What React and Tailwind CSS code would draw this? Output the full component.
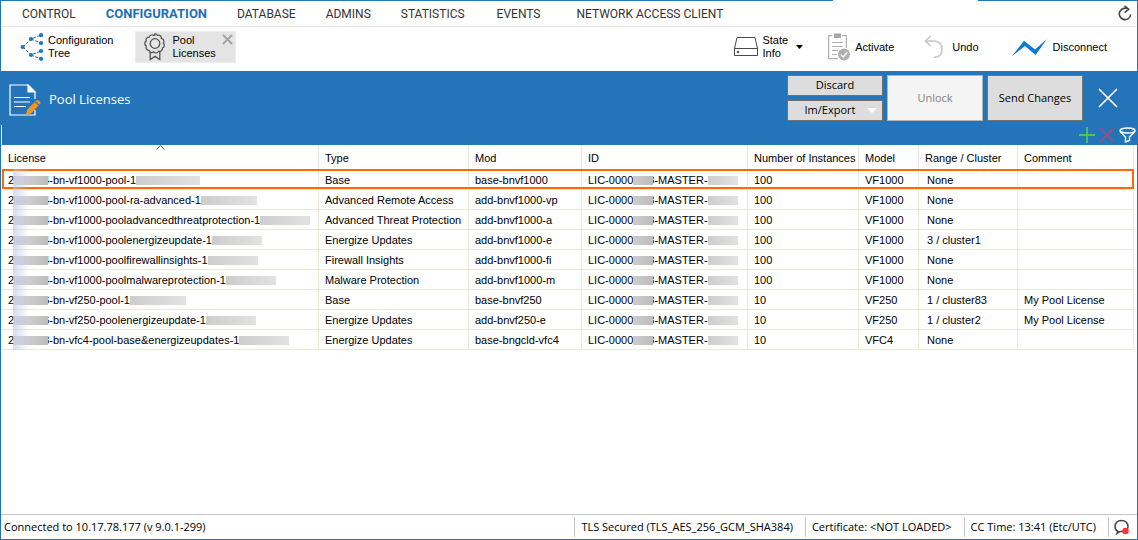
import React, { useState } from 'react';

const menu = [
    { label: 'CONTROL', gap: 'mr-[30px]' },
    { label: 'CONFIGURATION', gap: 'mr-[30px]' },
    { label: 'DATABASE', gap: 'mr-[30px]' },
    { label: 'ADMINS', gap: 'mr-[30px]' },
    { label: 'STATISTICS', gap: 'mr-8' },
    { label: 'EVENTS', gap: 'mr-9' },
    { label: 'NETWORK ACCESS CLIENT', gap: '' },
];

const columns = [
    { label: 'License', width: 'w-[317px]' },
    { label: 'Type', width: 'w-[150px]' },
    { label: 'Mod', width: 'w-[113px]' },
    { label: 'ID', width: 'w-[166px]' },
    { label: 'Number of Instances', width: 'w-[111px]' },
    { label: 'Model', width: 'w-[60px]' },
    { label: 'Range / Cluster', width: 'w-[99px]' },
    { label: 'Comment', width: '' },
];

const licenses = [
    { name: '4-bn-vf1000-pool-1', mask: 'w-16', type: 'Base', mod: 'base-bnvf1000', instances: 100, model: 'VF1000', range: 'None', comment: '' },
    { name: '4-bn-vf1000-pool-ra-advanced-1', mask: 'w-14', type: 'Advanced Remote Access', mod: 'add-bnvf1000-vp', instances: 100, model: 'VF1000', range: 'None', comment: '' },
    { name: '4-bn-vf1000-pooladvancedthreatprotection-1', mask: 'w-[50px]', type: 'Advanced Threat Protection', mod: 'add-bnvf1000-a', instances: 100, model: 'VF1000', range: 'None', comment: '' },
    { name: '4-bn-vf1000-poolenergizeupdate-1', mask: 'w-[50px]', type: 'Energize Updates', mod: 'add-bnvf1000-e', instances: 100, model: 'VF1000', range: '3 / cluster1', comment: '' },
    { name: '4-bn-vf1000-poolfirewallinsights-1', mask: 'w-[50px]', type: 'Firewall Insights', mod: 'add-bnvf1000-fi', instances: 100, model: 'VF1000', range: 'None', comment: '' },
    { name: '4-bn-vf1000-poolmalwareprotection-1', mask: 'w-[50px]', type: 'Malware Protection', mod: 'add-bnvf1000-m', instances: 100, model: 'VF1000', range: 'None', comment: '' },
    { name: '6-bn-vf250-pool-1', mask: 'w-14', type: 'Base', mod: 'base-bnvf250', instances: 10, model: 'VF250', range: '1 / cluster83', comment: 'My Pool License' },
    { name: '6-bn-vf250-poolenergizeupdate-1', mask: 'w-[50px]', type: 'Energize Updates', mod: 'add-bnvf250-e', instances: 10, model: 'VF250', range: '1 / cluster2', comment: 'My Pool License' },
    { name: '3-bn-vfc4-pool-base&energizeupdates-1', mask: 'w-[50px]', type: 'Energize Updates', mod: 'base-bngcld-vfc4', instances: 10, model: 'VFC4', range: 'None', comment: '' },
];

// Greyed-out part of a serial number
function Mask({ className }) {
    return <span className={`relative inline-block h-[9px] shrink-0 ${className}`}></span>;
}

function TreeIcon() {
    return (
        <svg className="w-6 h-7 shrink-0" viewBox="0 0 24 28" fill="#0a7ad6" aria-hidden="true">
            <path d="M3 14 11 6 21 2M11 6l10 4M3 14l8 8 10-4M11 22l10 4" fill="none" stroke="#555" strokeWidth="1" strokeDasharray="3 1.5" />
            <circle cx="2.6" cy="14" r="2.1" />
            <circle cx="11" cy="6" r="2.1" />
            <circle cx="11" cy="22" r="2.1" />
            <circle cx="21" cy="2.2" r="2.1" />
            <circle cx="21" cy="10" r="2.1" />
            <circle cx="21" cy="18" r="2.1" />
            <circle cx="21" cy="25.8" r="2.1" />
        </svg>
    );
}

function RibbonIcon() {
    return (
        <svg className="w-[22px] h-7 shrink-0" viewBox="0 0 22 28" fill="none" stroke="#555" strokeWidth="1.3" aria-hidden="true">
            <path d="M11 .9q1.6 0 2.5 1.4 1.6-.5 2.8.5t1.1 2.6q1.7.4 2.3 1.9t-.4 2.8q1.3 1.1 1 2.7t-1.9 2.2q.2 1.7-1 2.7t-2.7.6q-.8 1.4-2.4 1.6t-2.6-1.1q-1.3 1.1-2.8.6t-2-2.1q-1.7-.1-2.5-1.4t-.1-2.8q-1.4-.9-1.5-2.5t1.3-2.5q-.5-1.6.5-2.8t2.6-1.2q.5-1.6 2-2.1t2.8.5q.4-.7 1-.7z" />
            <circle cx="11" cy="10.5" r="4.8" />
            <path d="M6.2 19v7.6l4.8-3.2 4.8 3.2V19" />
        </svg>
    );
}

function DriveIcon() {
    return (
        <svg className="w-6 h-5 shrink-0" viewBox="0 0 24 20" fill="none" stroke="#4a4a4a" aria-hidden="true">
            <path d="M.5 11.5 3 .5h18l2.5 11zM.5 10.5v8h23v-8" />
            <circle cx="4" cy="15" r="1" fill="#4a4a4a" strokeWidth=".6" />
        </svg>
    );
}

function ClipboardIcon() {
    return (
        <svg className="w-6 h-7 shrink-0" viewBox="0 0 24 28" fill="none" stroke="#b0b0b0" strokeWidth="1.2" aria-hidden="true">
            <path d="M5 2.6H1.6v23H11M15 2.6h4.4V15M5 9.5h11M5 13.5h11M5 17.5h6M5 21.5h5" />
            <path d="M7 .5h7v4.500h-7z" fill="#a6a6a6" stroke="none" />
            <circle cx="17" cy="21.5" r="6" fill="#b0b0b0" stroke="none" />
            <path d="m14 21.7 2.2 2.3 4-4.7" stroke="#fff" strokeWidth="1.4" />
        </svg>
    );
}

function UndoIcon() {
    return (
        <svg className="w-5 h-6 shrink-0" viewBox="0 0 20 24" fill="none" stroke="#c8c8c8" strokeWidth="1.7" aria-hidden="true">
            <path d="M6.5 1 1.5 6l5 5M1.5 6H10q8 .5 8 8.200T10 22.300" />
        </svg>
    );
}

function PageEditIcon() {
    return (
        <svg className="w-8 h-8 shrink-0" viewBox="0 0 32 32" fill="none" stroke="#fff" strokeWidth="1.2" aria-hidden="true">
            <path d="M26 26v5H1V1h18l7 7v7" />
            <path d="M19 1v7h7z" fill="#fff" />
            <path d="M5 13.500h16M5 18h16M5 22.500h12" />
            <path d="m18.500 25.500 7.200-7.500 3.800 3.500-7.200 7.700-5.800 2z" fill="#f7941d" stroke="none" />
            <path d="m26.500 17.200 1-1q.8-.7 1.700 0l2 1.800q.8.800 0 1.700l-1 1z" fill="#f7941d" stroke="none" />
        </svg>
    );
}

function ActionButton({ className, children, ...props }) {
    return (
        <button
            type="button"
            className={`flex w-24 items-center justify-center border border-[#707070] bg-[#dddddd] text-black disabled:border-[#b5b5b5] disabled:bg-[#f4f4f4] disabled:text-[#838383] ${className}`}
            {...props}
        >
            {children}
        </button>
    );
}

export default function App() {
    const [active, setActive] = useState('CONFIGURATION');
    const [selected, setSelected] = useState(0);

    return (
        <div className="flex min-h-screen flex-col bg-white text-[11px] text-black font-['Liberation_Sans',sans-serif]">
            {/* Window edge */}
            <div className="flex h-px">
                <div className="flex-1 bg-[#2474ba]"></div>
                <div className="w-[145px]"></div>
                <div className="w-40 bg-[#2474ba]"></div>
            </div>

            <div className="flex flex-1 flex-col border-x border-b border-[#2474ba]">
                {/* Main menu */}
                <nav className="mx-px flex h-[26px] items-center border-b border-[#e5e5e5] pl-5 pr-1 text-xs text-[#333] font-[Roboto,sans-serif]">
                    {menu.map((item) => (
                        <a
                            key={item.label}
                            href="#"
                            onClick={() => setActive(item.label)}
                            className={`${item.gap} ${active === item.label ? 'text-[13px] font-bold text-[#1f6fb5]' : ''}`}
                        >
                            {item.label}
                        </a>
                    ))}
                    <button type="button" aria-label="Refresh" className="ml-auto">
                        <svg className="h-[17px] w-[14px]" viewBox="0 0 14 17" fill="none" stroke="#444" strokeWidth="1.600">
                            <path d="M10.500 4.400A5.700 5.700 0 1 0 12.700 9.500M6.500.8l4.200 3.500-4.200 3.300" />
                        </svg>
                    </button>
                </nav>

                {/* Toolbar */}
                <div className="flex h-11 items-center pb-1 pl-[19px] pr-[30px] leading-[13px]">
                    <button type="button" className="flex items-center gap-1 text-left">
                        <TreeIcon />
                        <span>Configuration<br />Tree</span>
                    </button>
                    <div className="ml-[22px] flex h-8 w-[101px] items-center gap-1.5 border border-[#ececec] bg-[#e4e4e4] pl-2">
                        <RibbonIcon />
                        <span>Pool<br />Licenses</span>
                        <button type="button" aria-label="Close tab" className="ml-auto mr-0.5 self-start pt-0.5">
                            <svg className="h-[11px] w-[11px]" viewBox="0 0 11 11" stroke="#a3a3a3" strokeWidth="1.800">
                                <path d="m1 1 9 9M10 1l-9 9" />
                            </svg>
                        </button>
                    </div>

                    <button type="button" className="ml-auto flex items-center gap-1 text-left">
                        <DriveIcon />
                        <span>State<br />Info</span>
                        <svg className="ml-1 h-1 w-[7px]" viewBox="0 0 7 4">
                            <path d="M0 0h7L3.500 4z" />
                        </svg>
                    </button>
                    <button type="button" className="ml-6 flex items-center gap-1">
                        <ClipboardIcon />
                        Activate
                    </button>
                    <button type="button" className="ml-[30px] flex items-center gap-2">
                        <UndoIcon />
                        Undo
                    </button>
                    <button type="button" className="ml-[33px] flex items-center gap-1.5">
                        <svg className="h-[17px] w-[35px]" viewBox="0 0 35 17" aria-hidden="true">
                            <path d="M0 17 12 1.800l11 8.700L35 0 23.500 16 13 7z" fill="#0a7ad6" />
                        </svg>
                        Disconnect
                    </button>
                </div>

                {/* Page header */}
                <header className="flex bg-[#2474ba] pb-1 pl-2 pr-[19px] pt-1 font-['Open_Sans',sans-serif]">
                    <div className="flex h-[46px] items-center gap-2 pt-1 text-[13px] text-white">
                        <PageEditIcon />
                        <h1>Pool Licenses</h1>
                    </div>
                    <div className="ml-auto grid grid-cols-3 grid-rows-2 gap-1">
                        <ActionButton className="h-[21px]">Discard</ActionButton>
                        <ActionButton className="row-span-2" disabled>Unlock</ActionButton>
                        <ActionButton className="row-span-2">Send Changes</ActionButton>
                        <ActionButton className="h-[21px] gap-3">
                            <span className="pl-3">Im/Export</span>
                            <svg className="h-[5px] w-[10px]" viewBox="0 0 10 5">
                                <path d="M0 0h10L5 5z" fill="#fff" />
                            </svg>
                        </ActionButton>
                    </div>
                    <button type="button" aria-label="Close" className="ml-[15px]">
                        <svg className="h-5 w-5" viewBox="0 0 20 20" stroke="#fff" strokeWidth="1.700">
                            <path d="m1 1 18 18M19 1 1 19" />
                        </svg>
                    </button>
                </header>

                {/* List actions */}
                <div className="flex h-5 items-center justify-end gap-1 border-l border-white bg-[#2474ba] pr-px">
                    <button type="button" aria-label="Add">
                        <svg className="h-4 w-4" viewBox="0 0 16 16" stroke="#4fc74f" strokeWidth="1.800">
                            <path d="M8 0v16M0 8h16" />
                        </svg>
                    </button>
                    <button type="button" aria-label="Delete">
                        <svg className="h-4 w-4" viewBox="0 0 16 16" stroke="#8c5580" strokeWidth="1.800">
                            <path d="m1 1 14 14M15 1 1 15" />
                        </svg>
                    </button>
                    <button type="button" aria-label="Filter">
                        <svg className="h-4 w-[17px]" viewBox="0 0 17 16" fill="none" stroke="#fff" strokeWidth="1.400">
                            <ellipse cx="8.500" cy="3.500" rx="7.500" ry="2.500" />
                            <path d="M1 4.200 6.500 10v5l4-1.500V10L16 4.200" />
                        </svg>
                    </button>
                </div>

                {/* Licenses */}
                <div className="flex-1 pl-px pr-[3px]">
                    <table className="w-full table-fixed border-separate border-spacing-0 text-left">
                        <thead>
                            <tr>
                                {columns.map((column, i) => (
                                    <th
                                        key={column.label}
                                        className={`relative h-6 whitespace-nowrap border-r border-[#e5e5e5] p-0 pl-1.5 pt-0.5 font-normal ${column.width}`}
                                    >
                                        {column.label}
                                        {i === 0 && (
                                            <svg className="absolute inset-x-0 top-0 mx-auto h-[5px] w-[9px]" viewBox="0 0 9 5" fill="none" stroke="#555">
                                                <path d="m.5 4.500 4-4 4 4" />
                                            </svg>
                                        )}
                                    </th>
                                ))}
                            </tr>
                        </thead>
                        <tbody>
                            {licenses.map((row, i) => (
                                <tr
                                    key={row.name}
                                    onClick={() => setSelected(i)}
                                    className={`relative h-5 last:h-[21px] *:border-t *:border-r *:border-[#ece9d8] *:p-0 *:pt-0.5 *:pl-1.5 *:whitespace-nowrap last:*:border-b ${selected === i ? 'z-10 outline-2 -outline-offset-2 outline-[#ff6a00]' : ''}`}
                                >
                                    <td>
                                        <div className="flex items-center">
                                            2
                                            <Mask className="-mr-[5px] w-[34px] bg-linear-to-r from-[#d9d9de] to-[#bcbcbc]" />
                                            {row.name}
                                            <Mask className={`bg-linear-to-r from-[#cdcdcd] to-[#e2e2e2] ${row.mask}`} />
                                        </div>
                                        <span className="absolute inset-y-0 left-[11px] w-[17px] bg-linear-to-r from-[#b9c6e2]/60 to-transparent"></span>
                                    </td>
                                    <td>{row.type}</td>
                                    <td>{row.mod}</td>
                                    <td>
                                        <div className="flex items-center">
                                            LIC-0000
                                            <Mask className="-mr-[5px] w-5 bg-linear-to-r from-[#cdcdcd] to-[#bcbcbc]" />
                                            8-MASTER-
                                            <Mask className="w-[30px] bg-linear-to-r from-[#cdcdcd] to-[#e2e2e2]" />
                                        </div>
                                    </td>
                                    <td>{row.instances}</td>
                                    <td>{row.model}</td>
                                    <td><span className="pl-0.5">{row.range}</span></td>
                                    <td>{row.comment}</td>
                                </tr>
                            ))}
                        </tbody>
                    </table>
                </div>

                {/* Status bar */}
                <footer className="flex h-[25px] items-center border-t border-[#c6c6c6] px-[3px] leading-5 font-['Open_Sans',sans-serif]">
                    <span>Connected to 10.17.78.177 (v 9.0.1-299)</span>
                    <span className="ml-auto border-l border-[#c6c6c6] pl-1.5 pr-3">TLS Secured (TLS_AES_256_GCM_SHA384)</span>
                    <span className="border-l border-[#c6c6c6] pl-1.5 pr-3">Certificate: &lt;NOT LOADED&gt;</span>
                    <span className="border-l border-[#c6c6c6] pl-1.5 pr-3">CC Time: 13:41 (Etc/UTC)</span>
                    <button type="button" aria-label="Messages" className="flex h-5 w-[26px] items-center border-l border-[#c6c6c6] pl-[5px]">
                        <svg className="h-4 w-4" viewBox="0 0 16 16" fill="none" stroke="#444" strokeWidth="1.500">
                            <path d="M4 12.500q-3-1.500-3-5Q1.500 1.500 7.500 1.500t6.500 6q0 5-6 5H6L3 14.500z" />
                            <circle cx="11.500" cy="12" r="3.200" fill="#f33" stroke="none" />
                        </svg>
                    </button>
                </footer>
            </div>
        </div>
    );
}
